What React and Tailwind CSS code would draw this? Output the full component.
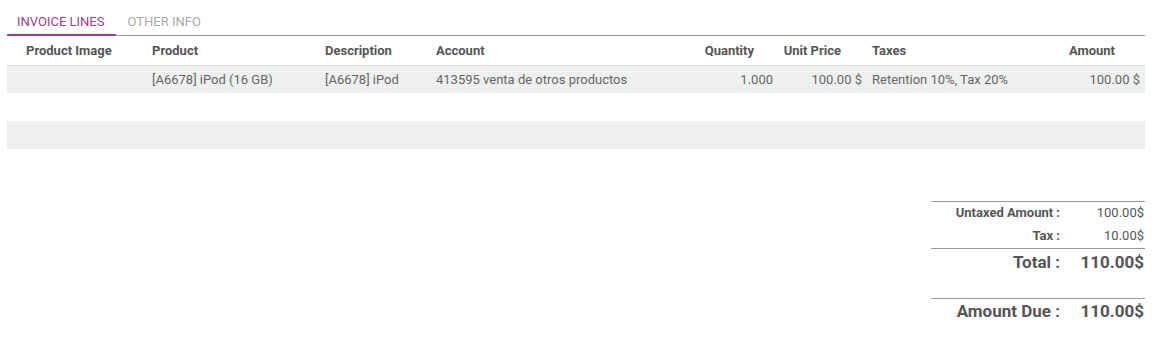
import React from 'react';

const cols = [
  { key: 'image', label: 'Product Image', w: 'w-[140px]', head: 'pl-[19px] text-left', cell: 'pl-[19px] text-left' },
  { key: 'product', label: 'Product', w: 'w-[173px]', head: 'pl-[5px] text-left', cell: 'pl-[5px] text-left' },
  { key: 'desc', label: 'Description', w: 'w-[111px]', head: 'pl-[5px] text-left', cell: 'pl-[5px] text-left' },
  { key: 'account', label: 'Account', w: 'w-[269px]', head: 'pl-[5px] text-left', cell: 'pl-[5px] text-left' },
  { key: 'qty', label: 'Quantity', w: 'w-[78px]', head: 'pr-[24px] text-right', cell: 'pr-[5px] text-right' },
  { key: 'price', label: 'Unit Price', w: 'w-[89px]', head: 'pr-[26px] text-right', cell: 'pr-[5px] text-right' },
  { key: 'taxes', label: 'Taxes', w: 'w-[173px]', head: 'pl-[5px] text-left', cell: 'pl-[5px] text-left' },
  { key: 'amount', label: 'Amount', w: 'w-[105px]', head: 'pr-[30px] text-right', cell: 'pr-[5px] text-right' },
];

const lines = [
  {
    image: '',
    product: '[A6678] iPod (16 GB)',
    desc: '[A6678] iPod',
    account: '413595 venta de otros productos',
    qty: '1.000',
    price: '100.00 $',
    taxes: 'Retention 10%, Tax 20%',
    amount: '100.00 $',
  },
];

export default function App() {
  return (
    <div className='w-[1156px] h-[355px] bg-white text-[13px] text-[#666] font-["Roboto",sans-serif] px-[7px] pt-[12px]'>
      {/* tabs */}
      <div className='flex border-b border-[#999] h-[24px] w-[1138px]'>
        <div className='pl-[10px] pr-[12px] text-[13px] leading-[19px] text-[#9a3f8f] border-b-2 border-[#9a3f8f] -mb-[1px]'>INVOICE LINES</div>
        <div className='px-[11px] text-[13px] leading-[19px] text-[#aaa]'>OTHER INFO</div>
      </div>

      <table className='table-fixed border-collapse w-[1138px]'>
        <colgroup>
          {cols.map(c => <col key={c.key} className={c.w} />)}
        </colgroup>
        <thead>
          <tr className='h-[29px] border-b border-[#ddd]'>
            {cols.map(c => (
              <th key={c.key} className={`${c.head} font-bold text-[#555] align-middle`}>{c.label}</th>
            ))}
          </tr>
        </thead>
        <tbody>
          {lines.map((l, i) => (
            <tr key={i} className='h-[28px] bg-[#eef0ef]'>
              {cols.map(c => (
                <td key={c.key} className={`${c.cell} whitespace-nowrap`}>{l[c.key]}</td>
              ))}
            </tr>
          ))}
          <tr className='h-[28px]'><td colSpan={8}></td></tr>
          <tr className='h-[28px] bg-[#eef0ef]'><td colSpan={8}></td></tr>
        </tbody>
      </table>

      {/* totals */}
      <div className='flex justify-end mt-[52px] w-[1138px]'>
        <div className='w-[214px] text-[#555]'>
          <div className='border-t border-[#999] pt-[1px]'>
            <div className='flex h-[20px] items-center text-[13px]'>
              <div className='w-[129px] text-right font-bold'>Untaxed Amount :</div>
              <div className='flex-1 text-right pr-[1px]'>100.00$</div>
            </div>
            <div className='flex h-[25px] items-center text-[13px]'>
              <div className='w-[129px] text-right font-bold'>Tax :</div>
              <div className='flex-1 text-right pr-[1px]'>10.00$</div>
            </div>
          </div>
          <div className='border-t border-[#999]'>
            <div className='flex h-[28px] items-center text-[17px] font-bold'>
              <div className='w-[129px] text-right'>Total :</div>
              <div className='flex-1 text-right pr-[1px]'>110.00$</div>
            </div>
          </div>
          <div className='border-t border-[#999] mt-[21px]'>
            <div className='flex h-[26px] items-center text-[17px] font-bold'>
              <div className='w-[129px] text-right'>Amount Due :</div>
              <div className='flex-1 text-right pr-[1px]'>110.00$</div>
            </div>
          </div>
        </div>
      </div>
    </div>
  );
}
